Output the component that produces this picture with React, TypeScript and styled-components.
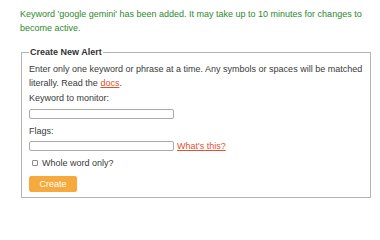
import React, { useState } from "react";
import styled, { createGlobalStyle } from "styled-components";

const GlobalStyle = createGlobalStyle`
  body {
    margin: 0;
    background: #ffffff;
    font-family: "Liberation Sans", Arial, sans-serif;
    font-size: 9px;
    color: #3a3a3a;
  }
`;

const Page = styled.div`
  padding: 7px 9px 0 20px;
  width: 351px;
`;

const Notice = styled.div`
  color: #2d8a2d;
  line-height: 14px;
  max-width: 345px;
`;

const Fieldset = styled.fieldset`
  margin: 10px 0 0 1px;
  padding: 0 7px 5px;
  border: 1px solid #b4b4b4;
  min-width: 0;
`;

const Legend = styled.legend`
  padding: 0 1px;
  margin-left: 0;
  font-weight: bold;
  line-height: 14px;
  color: #333333;
`;

const Text = styled.p`
  margin: 3px 0 0;
  line-height: 14px;
`;

const Link = styled.a`
  color: #e0512f;
  text-decoration: underline;
`;

const Label = styled.label<{ $gap: number }>`
  display: block;
  margin-top: ${(p) => p.$gap}px;
  line-height: 14px;
`;

const FieldRow = styled.div<{ $gap: number }>`
  display: flex;
  align-items: center;
  gap: 3px;
  margin-top: ${(p) => p.$gap}px;
  height: 10px;
`;

const TextInput = styled.input`
  box-sizing: border-box;
  width: 145px;
  height: 10px;
  margin: 0;
  padding: 0 2px;
  border: 1px solid #a9a9a9;
  border-radius: 2px;
  font: inherit;
  font-size: 7px;
  outline: none;
`;

const CheckRow = styled.label`
  display: flex;
  align-items: center;
  gap: 4px;
  margin-top: 5px;
  padding-left: 3px;
  line-height: 14px;
`;

const Check = styled.input`
  appearance: none;
  box-sizing: border-box;
  width: 6px;
  height: 6px;
  margin: 0;
  border: 1px solid #8c8c8c;
  border-radius: 1px;
  background: #fff;
  &:checked {
    background: #4a7fd4;
    border-color: #4a7fd4;
  }
`;

const Button = styled.button`
  display: block;
  margin-top: 6px;
  width: 48px;
  height: 16px;
  padding: 0;
  border: none;
  border-radius: 2px;
  background: #f6aa3e;
  color: #ffffff;
  font: inherit;
  cursor: pointer;
`;

export default function App() {
  const [keyword, setKeyword] = useState("");
  const [flags, setFlags] = useState("");
  const [whole, setWhole] = useState(false);

  return (
    <Page>
      <GlobalStyle />
      <Notice>
        Keyword 'google gemini' has been added. It may take up to 10 minutes
        for changes to become active.
      </Notice>
      <Fieldset>
        <Legend>Create New Alert</Legend>
        <Text>
          Enter only one keyword or phrase at a time. Any symbols or spaces
          will be matched literally. Read the <Link href="#">docs</Link>.
        </Text>
        <Label $gap={1}>Keyword to monitor:</Label>
        <FieldRow $gap={4}>
          <TextInput value={keyword} onChange={(e) => setKeyword(e.target.value)} />
        </FieldRow>
        <Label $gap={5}>Flags:</Label>
        <FieldRow $gap={3}>
          <TextInput value={flags} onChange={(e) => setFlags(e.target.value)} />
          <Link href="#">What's this?</Link>
        </FieldRow>
        <CheckRow>
          <Check
            type="checkbox"
            checked={whole}
            onChange={(e) => setWhole(e.target.checked)}
          />
          Whole word only?
        </CheckRow>
        <Button type="button">Create</Button>
      </Fieldset>
    </Page>
  );
}
